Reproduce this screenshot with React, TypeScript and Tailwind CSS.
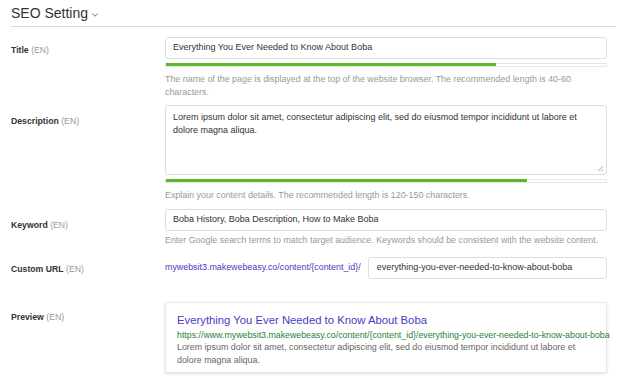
import { ChevronDown } from 'lucide-react'

const font = { fontFamily: '"Liberation Sans", Arial, sans-serif' }

function Label({ name }: { name: string }) {
  return (
    <div className="w-[154px] shrink-0 text-[8.7px] text-[#333]">
      <span className="font-bold">{name}</span>{' '}
      <span className="text-[#999]">(EN)</span>
    </div>
  )
}

function Bar({ pct }: { pct: number }) {
  return (
    <div className="mt-[4px] h-[4px] border border-[#e6e6e6] bg-white">
      <div className="bg-[#5cb82a] -mt-px" style={{ width: `${pct}%`, height: 3 }} />
    </div>
  )
}

export default function App() {
  return (
    <div className="w-[620px] h-[392px] bg-white pl-[11px] pr-[4px]" style={font}>
      {/* Header */}
      <div className="flex items-center h-[27px] border-b border-[#ddd] pt-[1px]">
        <span className="text-[14px] text-[#333]">SEO Setting</span>
        <ChevronDown size={10} strokeWidth={2} className="ml-[2px] mt-[2px] text-[#555]" />
      </div>

      {/* Title */}
      <div className="flex mt-[10px]">
        <div className="pt-[7px]"><Label name="Title" /></div>
        <div className="w-[442px]">
          <div className="h-[22px] border border-[#ddd] rounded-[3px] px-[7px] flex items-center text-[9px] text-[#333]">
            Everything You Ever Needed to Know About Boba
          </div>
          <Bar pct={75} />
          <p className="mt-[6px] text-[8.9px] leading-[13px] text-[#999]">
            The name of the page is displayed at the top of the website browser. The recommended length is 40-60 characters.
          </p>
        </div>
      </div>

      {/* Description */}
      <div className="flex mt-[6px]">
        <div className="pt-[10px]"><Label name="Description" /></div>
        <div className="w-[442px]">
          <div className="relative h-[70px] border border-[#ddd] rounded-[3px] px-[7px] pt-[5px] text-[9px] leading-[13px] text-[#333]">
            <div className="w-[412px]">
              Lorem ipsum dolor sit amet, consectetur adipiscing elit, sed do eiusmod tempor incididunt ut labore et dolore magna aliqua.
            </div>
            <svg className="absolute right-[2px] bottom-[2px]" width="7" height="7" viewBox="0 0 7 7">
              <path d="M1 6L6 1M4 6L6 4" stroke="#aaa" strokeWidth="1" />
            </svg>
          </div>
          <Bar pct={82} />
          <p className="mt-[6px] text-[8.9px] leading-[13px] text-[#999]">
            Explain your content details. The recommended length is 120-150 characters.
          </p>
        </div>
      </div>

      {/* Keyword */}
      <div className="flex mt-[7px]">
        <div className="pt-[10px]"><Label name="Keyword" /></div>
        <div className="w-[442px]">
          <div className="h-[22px] border border-[#ddd] rounded-[3px] px-[7px] flex items-center text-[9px] text-[#333]">
            Boba History, Boba Description, How to Make Boba
          </div>
          <p className="mt-[3px] text-[8.9px] leading-[13px] text-[#999]">
            Enter Google search terms to match target audience. Keywords should be consistent with the website content.
          </p>
        </div>
      </div>

      {/* Custom URL */}
      <div className="flex items-center mt-[10px]">
        <div className="pt-[4px]"><Label name="Custom URL" /></div>
        <div className="w-[442px] flex items-center">
          <span className="text-[8.9px] text-[#4a3bc4] whitespace-nowrap">mywebsit3.makewebeasy.co/content/{'{content_id}'}/</span>
          <div className="ml-[7px] flex-1 h-[22px] border border-[#ddd] rounded-[3px] px-[8px] flex items-center text-[9px] text-[#333]">
            everything-you-ever-needed-to-know-about-boba
          </div>
        </div>
      </div>

      {/* Preview */}
      <div className="flex mt-[23px]">
        <div className="pt-[9px]"><Label name="Preview" /></div>
        <div className="w-[442px] h-[71px] border border-[#e8e8e8] shadow-[0_1px_3px_rgba(0,0,0,0.12)] pl-[11px] pt-[9px]">
          <div className="text-[11.3px] leading-[17px] text-[#4a3bc4]">Everything You Ever Needed to Know About Boba</div>
          <div className="text-[8.8px] leading-[12px] text-[#1f7f3a] whitespace-nowrap">
            https://www.mywebsit3.makewebeasy.co/content/{'{content_id}'}/everything-you-ever-needed-to-know-about-boba
          </div>
          <div className="text-[8.9px] leading-[13px] text-[#666] w-[402px]">
            Lorem ipsum dolor sit amet, consectetur adipiscing elit, sed do eiusmod tempor incididunt ut labore et dolore magna aliqua.
          </div>
        </div>
      </div>
    </div>
  )
}
